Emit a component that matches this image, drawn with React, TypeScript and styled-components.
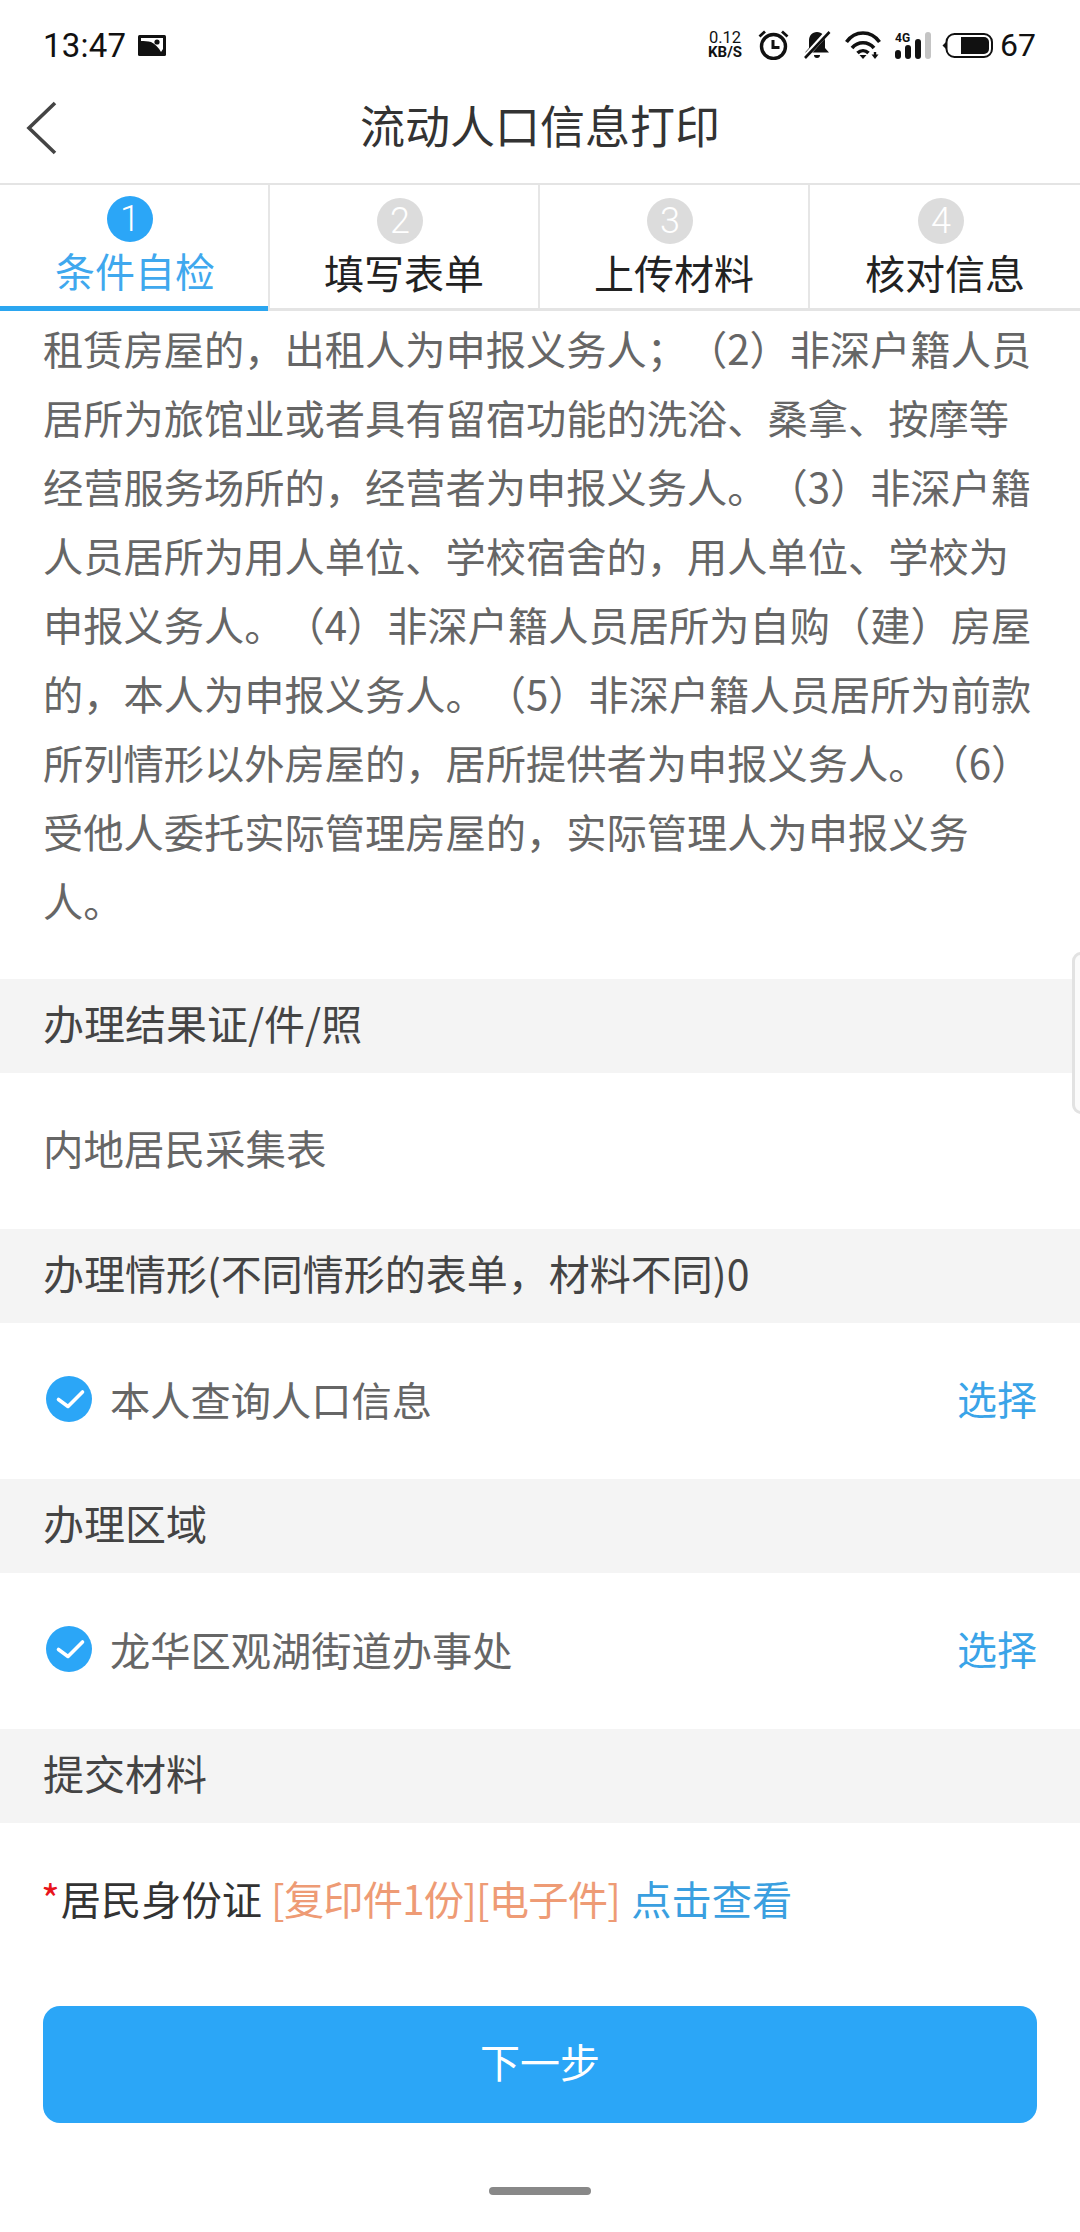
import React from "react";
import styled, { createGlobalStyle } from "styled-components";

const Global = createGlobalStyle`
  html, body { margin: 0; padding: 0; background: #fff; }
  * { box-sizing: border-box; }
  body {
    font-family: "Noto Sans CJK SC", "Noto Sans", sans-serif;
    text-spacing-trim: space-all;
  }
`;

const Page = styled.div`
  position: relative;
  width: 1080px;
  height: 2232px;
  display: flex;
  flex-direction: column;
  background: #fff;
  overflow: hidden;
`;

const StatusBar = styled.div`
  height: 90px;
  padding: 0 44px 0 43px;
  display: flex;
  align-items: center;
  justify-content: space-between;
  font-family: Roboto, sans-serif;
  color: #111;
`;
const StatusLeft = styled.div`
  display: flex;
  align-items: center;
  gap: 12px;
`;
const Time = styled.span`
  font-size: 33px;
  line-height: 1;
  letter-spacing: 0.2px;
`;
const StatusRight = styled.div`
  display: flex;
  align-items: center;
  gap: 14px;
`;
const Speed = styled.div`
  display: flex;
  flex-direction: column;
  align-items: center;
  width: 38px;
  color: #111;
`;
const SpeedValue = styled.span`
  font-size: 16.5px;
  line-height: 15px;
`;
const SpeedUnit = styled.span`
  font-size: 15px;
  line-height: 15px;
  font-weight: 700;
`;
const Battery = styled.svg`
  margin-left: -3px;
`;
const BatteryLevel = styled.span`
  font-size: 32px;
  line-height: 1;
  margin-left: -7px;
`;

const Nav = styled.div`
  position: relative;
  height: 93px;
  padding: 0 27px 24px;
  display: flex;
  align-items: center;
  justify-content: center;
`;
const BackIcon = styled.svg`
  position: absolute;
  left: 26px;
  top: 11px;
`;
const Title = styled.h1`
  margin: 0;
  font-size: 45px;
  line-height: 60px;
  font-weight: 400;
  color: #333;
`;

const Tabs = styled.div`
  height: 128px;
  display: grid;
  grid-template-columns: repeat(4, 1fr);
  border-top: 2px solid #e4e4e4;
  border-bottom: 3px solid #e4e4e4;
`;
const Tab = styled.div<{ $active?: boolean }>`
  position: relative;
  display: flex;
  flex-direction: column;
  align-items: center;
  padding-top: ${(p) => (p.$active ? 11 : 13)}px;
  border-right: 2px solid #e6e6e6;
  &:last-child { border-right: none; }
  ${(p) =>
    p.$active &&
    `&::after {
      content: "";
      position: absolute;
      left: 0;
      right: 0;
      bottom: -3px;
      height: 5px;
      background: #2ba6f0;
    }`}
`;
const TabNumber = styled.span<{ $active?: boolean }>`
  width: 46px;
  height: 46px;
  margin-left: -8px;
  border-radius: 50%;
  background: ${(p) => (p.$active ? "#2ba6f7" : "#dcdcdc")};
  color: #fff;
  font-family: Roboto, sans-serif;
  font-weight: 300;
  font-size: 36px;
  line-height: 46px;
  text-align: center;
`;
const TabLabel = styled.span<{ $active?: boolean }>`
  margin-top: 5px;
  margin-left: ${(p) => (p.$active ? 2 : 0)}px;
  font-size: 40px;
  line-height: 46px;
  color: ${(p) => (p.$active ? "#3fa8ee" : "#222")};
`;

const Terms = styled.div`
  padding: 2px 0 45px 43px;
  font-size: 40.25px;
  line-height: 69px;
  color: #666;
`;
const TermLine = styled.span`
  display: block;
  white-space: nowrap;
`;

const SectionHead = styled.div`
  height: 94px;
  padding: 0 43px 8px;
  display: flex;
  align-items: center;
  background: #f4f4f4;
  font-size: 41px;
  color: #444;
`;
const ResultRow = styled.div`
  height: 156px;
  padding: 0 43px 8px;
  display: flex;
  align-items: center;
  font-size: 40.5px;
  color: #666;
`;
const ChoiceRow = styled.div`
  height: 156px;
  padding: 0 43px 6px 46px;
  display: flex;
  align-items: center;
  font-size: 40.25px;
  color: #666;
`;
const CheckMark = styled.svg`
  margin-top: 2px;
`;
const ChoiceLabel = styled.span`
  flex: 1;
  margin-left: 18px;
`;
const Pick = styled.span`
  color: #3aa4e8;
  font-size: 40px;
`;
const MaterialRow = styled.div`
  height: 183px;
  padding: 0 43px 34px;
  display: flex;
  align-items: center;
  font-size: 40.25px;
  color: #333;
  white-space: pre;
`;
const Star = styled.span`
  color: #e8141c;
  margin-left: -2px;
  margin-right: 1px;
`;
const Copies = styled.span`
  color: #ee9b75;
  letter-spacing: -0.8px;
`;
const ViewLink = styled.span`
  color: #3a9fe0;
  margin-left: 3px;
`;
const Next = styled.button`
  height: 117px;
  margin: 0 43px;
  border: none;
  border-radius: 17px;
  background: #2ba6f7;
  color: #fff;
  font-family: inherit;
  font-size: 40px;
  padding: 0 0 8px;
`;
const HomeBar = styled.div`
  align-self: center;
  width: 102px;
  height: 8px;
  margin-top: 64px;
  border-radius: 4px;
  background: #888;
`;
const SideHandle = styled.div`
  position: absolute;
  right: -10px;
  top: 952px;
  width: 18px;
  height: 162px;
  border: 3px solid #e2e2e2;
  border-radius: 9px;
  background: #fbfbfb;
`;

const steps = ["条件自检", "填写表单", "上传材料", "核对信息"];
const terms = [
  "租赁房屋的，出租人为申报义务人；（2）非深户籍人员",
  "居所为旅馆业或者具有留宿功能的洗浴、桑拿、按摩等",
  "经营服务场所的，经营者为申报义务人。（3）非深户籍",
  "人员居所为用人单位、学校宿舍的，用人单位、学校为",
  "申报义务人。（4）非深户籍人员居所为自购（建）房屋",
  "的，本人为申报义务人。（5）非深户籍人员居所为前款",
  "所列情形以外房屋的，居所提供者为申报义务人。（6）",
  "受他人委托实际管理房屋的，实际管理人为申报义务",
  "人。",
];

const Check = () => (
  <CheckMark width="46" height="46" viewBox="0 0 46 46">
    <circle cx="23" cy="23" r="23" fill="#2ba6f7" />
    <path d="M12.5 23.500l9.500 7L36.500 16" fill="none" stroke="#fff" strokeWidth="3.600" strokeLinecap="round" strokeLinejoin="round" />
  </CheckMark>
);

export default function App() {
  return (
    <Page>
      <Global />
      <StatusBar>
        <StatusLeft>
          <Time>13:47</Time>
          <svg width="28" height="21" viewBox="0 0 28 21">
            <rect width="28" height="21" rx="1.500" fill="#111" />
            <path d="M3 3h22v11l-2 3c-2-4-6-8-10-10-3-1-7-1-10-1z" fill="#fff" />
            <circle cx="19" cy="7" r="2.600" fill="#111" />
          </svg>
        </StatusLeft>
        <StatusRight>
          <Speed>
            <SpeedValue>0.12</SpeedValue>
            <SpeedUnit>KB/S</SpeedUnit>
          </Speed>
          <svg width="31" height="30" viewBox="0 0 31 30" fill="none" stroke="#111">
            <circle cx="15.500" cy="16.500" r="12" strokeWidth="3.400" />
            <path d="M15 10v7.500h6.500" strokeWidth="3" />
            <path d="M1.500 6.500L7 1.500M29.500 6.500L24 1.500" strokeWidth="2.800" />
          </svg>
          <svg width="28" height="30" viewBox="0 0 28 30">
            <path d="M14 2c-5 0-8 3.500-8 9v7l-4 4.500h24l-4-4.500v-7c0-5.500-3-9-8-9z" fill="#111" />
            <path d="M11 25h6a3 3 0 0 1-6 0z" fill="#111" />
            <path d="M25 1.500L2 27" stroke="#fff" strokeWidth="5" />
            <path d="M26.500 2L2 28" stroke="#111" strokeWidth="2.600" />
          </svg>
          <svg width="36" height="28" viewBox="0 0 36 28" fill="none" stroke="#111" strokeWidth="3.600">
            <path d="M1.500 11C10 -1 26 -1 34.500 11" />
            <path d="M7 17c6-7 16-7 22 0" />
            <path d="M12.500 22c3.200-3 7.800-3 11 0" />
            <path d="M14.500 24h7l-3.500 4z" fill="#111" stroke="none" />
            <path d="M30 21v3" strokeWidth="2.400" />
            <path d="M26.500 23.500h7L30 28z" fill="#111" stroke="none" />
          </svg>
          <svg width="36" height="27" viewBox="0 0 36 27">
            <text x="0" y="10" fontFamily="Roboto, sans-serif" fontSize="12" fontWeight="700" fill="#111">4G</text>
            <rect x="0" y="18" width="6" height="9" rx="3" fill="#111" />
            <rect x="10" y="13" width="6" height="14" rx="3" fill="#111" />
            <rect x="20" y="7" width="6" height="20" rx="3" fill="#111" />
            <rect x="30" y="0" width="6" height="27" rx="3" fill="#c4c4c4" />
          </svg>
          <Battery width="51" height="25" viewBox="0 0 51 25">
            <path d="M4 9L0.500 12.500 4 16z" fill="#111" />
            <rect x="4.500" y="1" width="45.500" height="23" rx="8" fill="none" stroke="#111" strokeWidth="2" />
            <path d="M19 4h23a5 5 0 0 1 5 5v7a5 5 0 0 1-5 5H19z" fill="#111" />
          </Battery>
          <BatteryLevel>67</BatteryLevel>
        </StatusRight>
      </StatusBar>

      <Nav>
        <BackIcon width="32" height="54" viewBox="0 0 32 54" fill="none" stroke="#444" strokeWidth="3.600">
          <path d="M29 2L3 27l26 25" />
        </BackIcon>
        <Title>流动人口信息打印</Title>
      </Nav>

      <Tabs>
        {steps.map((s, i) => (
          <Tab key={s} $active={i === 0}>
            <TabNumber $active={i === 0}>{i + 1}</TabNumber>
            <TabLabel $active={i === 0}>{s}</TabLabel>
          </Tab>
        ))}
      </Tabs>

      <Terms>
        {terms.map((t) => (
          <TermLine key={t}>{t}</TermLine>
        ))}
      </Terms>

      <SectionHead>办理结果证/件/照</SectionHead>
      <ResultRow>内地居民采集表</ResultRow>
      <SectionHead>办理情形(不同情形的表单，材料不同)0</SectionHead>
      <ChoiceRow>
        <Check />
        <ChoiceLabel>本人查询人口信息</ChoiceLabel>
        <Pick>选择</Pick>
      </ChoiceRow>
      <SectionHead>办理区域</SectionHead>
      <ChoiceRow>
        <Check />
        <ChoiceLabel>龙华区观湖街道办事处</ChoiceLabel>
        <Pick>选择</Pick>
      </ChoiceRow>
      <SectionHead>提交材料</SectionHead>
      <MaterialRow>
        <Star>*</Star>
        <span>居民身份证 </span>
        <Copies>[复印件1份][电子件] </Copies>
        <ViewLink>点击查看</ViewLink>
      </MaterialRow>
      <Next>下一步</Next>
      <HomeBar />
      <SideHandle />
    </Page>
  );
}
